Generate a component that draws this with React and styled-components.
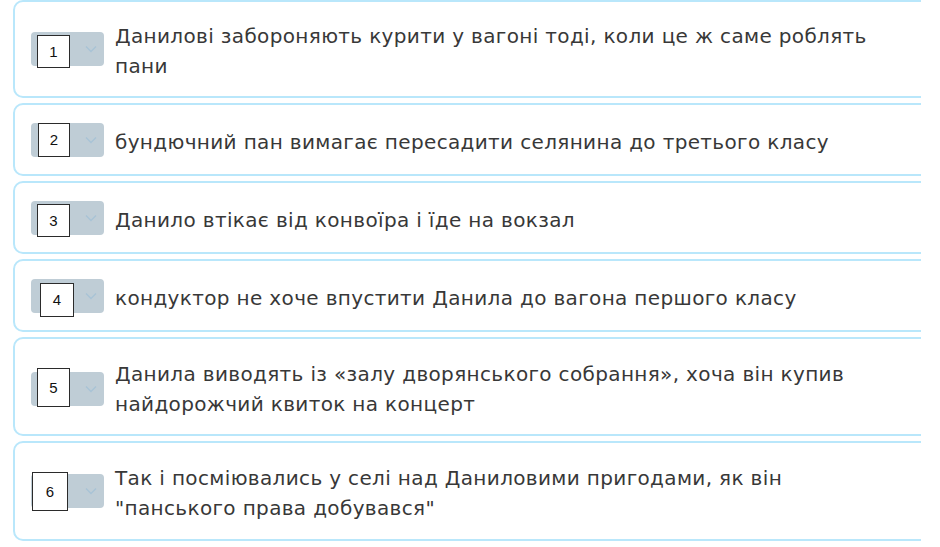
import React from 'react';
import styled, { createGlobalStyle } from 'styled-components';

const GlobalStyle = createGlobalStyle`
  body {
    margin: 0;
    background: #fff;
    font-family: "DejaVu Sans", Inter, sans-serif;
  }
`;

const Page = styled.div`
  width: 921px;
  height: 547px;
  overflow: hidden;
`;

const List = styled.div`
  display: flex;
  flex-direction: column;
  gap: 5px;
  margin-left: 13px;
  width: 930px;
`;

const Card = styled.div`
  display: flex;
  align-items: center;
  gap: 11px;
  box-sizing: border-box;
  min-height: ${(p) => p.$height}px;
  padding: 0 16px;
  border: 2px solid #b9e7fb;
  border-radius: 10px;
  background: #fff;
`;

const Select = styled.div`
  position: relative;
  flex: 0 0 73px;
  height: 34px;
  border-radius: 4px;
  background: #bfcdd6;
  display: flex;
  align-items: center;
  justify-content: flex-end;
  padding-right: 6px;
  box-sizing: border-box;
  margin-top: ${(p) => p.$shift || 0}px;
`;

const NumberTag = styled.div`
  position: absolute;
  left: ${(p) => p.$x}px;
  top: ${(p) => p.$y}px;
  width: ${(p) => p.$w}px;
  height: ${(p) => p.$h}px;
  box-sizing: border-box;
  border: 1px solid #2b2b2b;
  background: #fff;
  display: flex;
  align-items: center;
  justify-content: center;
  font-family: "Liberation Sans", Arial, sans-serif;
  font-size: 15px;
  color: #111;
`;

const Text = styled.div`
  margin-top: 4px;
  font-size: 20px;
  line-height: 30px;
  letter-spacing: 0.35px;
  color: #383838;
`;

const Chevron = () => (
  <svg width="14" height="14" viewBox="0 0 14 14" fill="none">
    <path d="M2 4.5 L7 9.5 L12 4.5" stroke="#a8c3d6" strokeWidth="1.3" />
  </svg>
);

const items = [
  {
    n: 1,
    height: 98,
    tag: { x: 6, y: 3, w: 33, h: 33 },
    text: ['Данилові забороняють курити у вагоні тоді, коли це ж саме роблять', 'пани'],
  },
  {
    n: 2,
    height: 73,
    tag: { x: 7, y: 0, w: 32, h: 34 },
    text: ['бундючний пан вимагає пересадити селянина до третього класу'],
  },
  {
    n: 3,
    height: 73,
    tag: { x: 6, y: 3, w: 33, h: 33 },
    text: ['Данило втікає від конвоїра і їде на вокзал'],
  },
  {
    n: 4,
    height: 73,
    tag: { x: 9, y: 4, w: 34, h: 34 },
    text: ['кондуктор не хоче впустити Данила до вагона першого класу'],
  },
  {
    n: 5,
    height: 99,
    shift: 4,
    tag: { x: 6, y: -4, w: 33, h: 39 },
    text: ['Данила виводять із «залу дворянського собрання», хоча він купив', 'найдорожчий квиток на концерт'],
  },
  {
    n: 6,
    height: 100,
    tag: { x: 1, y: -2, w: 36, h: 39 },
    text: ['Так і посміювались у селі над Даниловими пригодами, як він', '"панського права добувався"'],
  },
];

export default function App() {
  return (
    <Page>
      <GlobalStyle />
      <List>
        {items.map((item) => (
          <Card key={item.n} $height={item.height}>
            <Select $shift={item.shift}>
              <Chevron />
              <NumberTag $x={item.tag.x} $y={item.tag.y} $w={item.tag.w} $h={item.tag.h}>
                {item.n}
              </NumberTag>
            </Select>
            <Text>
              {item.text.map((line) => (
                <div key={line}>{line}</div>
              ))}
            </Text>
          </Card>
        ))}
      </List>
    </Page>
  );
}
